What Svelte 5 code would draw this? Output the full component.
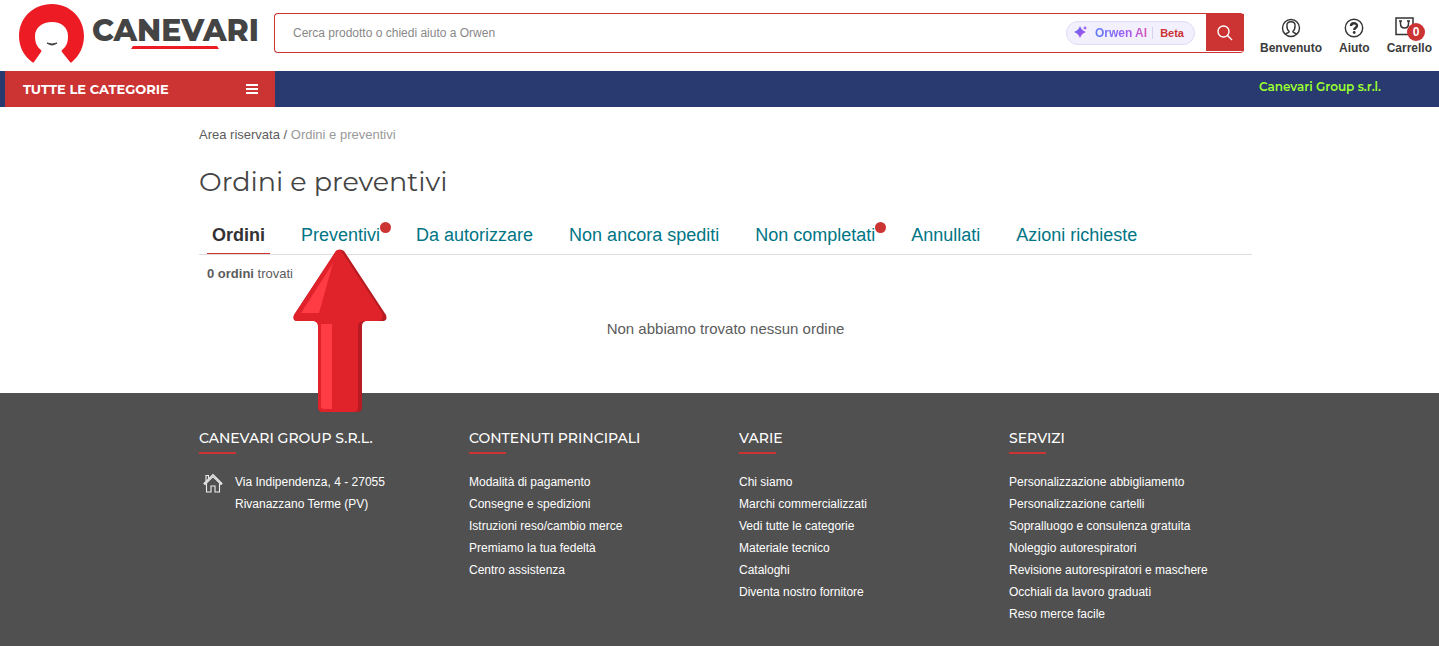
<script lang="ts">
  let query = '';
  let current = 'Ordini';

  const tabs = [
    { label: 'Ordini' },
    { label: 'Preventivi', alert: true, pointer: true },
    { label: 'Da autorizzare' },
    { label: 'Non ancora spediti' },
    { label: 'Non completati', alert: true },
    { label: 'Annullati' },
    { label: 'Azioni richieste' }
  ];

  const columns = [
    {
      title: 'Contenuti principali',
      links: [
        'Modalità di pagamento',
        'Consegne e spedizioni',
        'Istruzioni reso/cambio merce',
        'Premiamo la tua fedeltà',
        'Centro assistenza'
      ]
    },
    {
      title: 'Varie',
      links: [
        'Chi siamo',
        'Marchi commercializzati',
        'Vedi tutte le categorie',
        'Materiale tecnico',
        'Cataloghi',
        'Diventa nostro fornitore'
      ]
    },
    {
      title: 'Servizi',
      links: [
        'Personalizzazione abbigliamento',
        'Personalizzazione cartelli',
        'Sopralluogo e consulenza gratuita',
        'Noleggio autorespiratori',
        'Revisione autorespiratori e maschere',
        'Occhiali da lavoro graduati',
        'Reso merce facile'
      ]
    }
  ];
</script>

<svelte:head>
  <title>Ordini e preventivi | Canevari</title>
</svelte:head>

<div class="page">
  <header>
    <a class="logo" href="/" aria-label="Canevari">
      <svg width="66" height="60" viewBox="0 0 66 60" aria-hidden="true">
        <path
          d="M13 58 C5 52 0 43 0 32 C0 14 14 0 33 0 C51 0 65 14 65 32 C65 43 60 52 53 58 Q52 59 51 58 L43 48 Q42 47 43 46 C47 43 49 39 49 32 C49 24 43 18 33 18 C23 18 16 24 16 32 C16 39 18 43 22 46 Q23 47 22 48 L15 58 Q14 59 13 58Z"
          fill="#ed1c24"
        />
        <path d="M28 39 Q33 41 38 39 Q33 43 28 39Z" fill="#444" stroke="#444" />
      </svg>
      <span class="wordmark">
        CANEVARI
        <svg width="88" height="4" viewBox="0 0 88 4" aria-hidden="true">
          <path d="M2 0H86L88 3H0Z" fill="#ed1c24" />
        </svg>
      </span>
    </a>

    <form class="search" on:submit|preventDefault>
      <input type="text" bind:value={query} placeholder="Cerca prodotto o chiedi aiuto a Orwen" aria-label="Cerca prodotto" />
      <button type="button" class="orwen">
        <svg width="14" height="14" viewBox="0 0 14 14" aria-hidden="true">
          <defs>
            <linearGradient id="spark" x1="0" y1="0" x2="1" y2="1">
              <stop offset="0" stop-color="#4f6df5" />
              <stop offset="1" stop-color="#c04be0" />
            </linearGradient>
          </defs>
          <path d="M6 0Q7.500 4.500 12 6Q7.500 7.500 6 12Q4.500 7.500 0 6Q4.500 4.500 6 0Z" fill="url(#spark)" />
          <path d="M11 0Q11.500 1.500 13 2Q11.500 2.500 11 4Q10.500 2.500 9 2Q10.500 1.500 11 0Z" fill="#9c5af0" />
        </svg>
        <span class="ai">Orwen AI</span>
        <span class="beta">Beta</span>
      </button>
      <button type="submit" class="go" aria-label="Cerca">
        <svg width="16" height="16" viewBox="0 0 16 16" fill="none" stroke="#fff" stroke-width="1.4" aria-hidden="true">
          <circle cx="6.500" cy="6.500" r="5.500" />
          <path d="M10.500 10.500L15 15" />
        </svg>
      </button>
    </form>

    <nav class="tools" aria-label="Account">
      <a href="/account">
        <svg width="20" height="22" viewBox="0 0 20 22" fill="none" stroke="#333" stroke-width="1.400" aria-hidden="true">
          <circle cx="10" cy="11" r="8.500" />
          <path d="M4.500 17.300C5 15.700 8.200 16.200 8.200 14.500C6.300 13 5.900 10.500 5.900 8.500C5.900 6 7.500 4.700 10 4.700S14.100 6 14.100 8.500C14.100 10.500 13.700 13 11.800 14.500C11.800 16.200 15 15.700 15.500 17.300" />
        </svg>
        Benvenuto
      </a>
      <a href="/aiuto">
        <svg width="20" height="22" viewBox="0 0 20 22" fill="none" stroke="#333" aria-hidden="true">
          <circle cx="10" cy="11" r="8.700" stroke-width="1.400" />
          <path d="M7 9C7 5.300 13 5.500 13 8.700C13 10.700 10.200 10.800 10.200 13" stroke-width="2.400" />
          <circle cx="10.200" cy="15.500" r="1.400" fill="#333" stroke="none" />
        </svg>
        Aiuto
      </a>
      <a href="/carrello" class="cart">
        <svg width="20" height="22" viewBox="0 0 20 22" fill="none" stroke="#333" stroke-width="1.500" aria-hidden="true">
          <path d="M1 1H18V17.500H1Z" />
          <path d="M5.500 4V6.500C5.500 12.500 13.500 12.500 13.500 6.500V4M4 4H7M12 4H15" />
        </svg>
        <span class="count">0</span>
        Carrello
      </a>
    </nav>
  </header>

  <div class="bar">
    <button class="categories">
      TUTTE LE CATEGORIE
      <svg width="12" height="10" viewBox="0 0 12 10" aria-hidden="true">
        <path d="M0 1H12M0 5H12M0 9H12" stroke="#fff" stroke-width="2" />
      </svg>
    </button>
    <a class="company" href="/azienda">Canevari Group s.r.l.</a>
  </div>

  <main>
    <nav class="breadcrumb" aria-label="Breadcrumb">
      <a href="/area-riservata">Area riservata</a>
      <span>/</span>
      <span class="here">Ordini e preventivi</span>
    </nav>

    <h1>Ordini e preventivi</h1>

    <nav class="tabs" aria-label="Ordini">
      {#each tabs as tab}
        <a href="#{tab.label}" class:active={tab.label === current} on:click={() => (current = tab.label)}>
          {tab.label}
          {#if tab.alert}<span class="dot"></span>{/if}
          {#if tab.pointer}
            <svg class="pointer" width="94" height="164" viewBox="0 0 94 164" aria-hidden="true">
              <path d="M43 2Q47 -1 51 2L93 66Q95 72 89 72H73Q69 73 69 77V158Q69 163 64 163H30Q25 163 25 158V77Q25 73 21 72H5Q-1 72 1 66Z" fill="#b81c22" />
              <path d="M43 2Q46 -1 49 3L89 64Q91 71 85 72H70Q65 73 65 77V158Q65 163 61 163H30Q25 163 25 158V77Q25 73 21 72H5Q-1 72 1 66Z" fill="#e0232a" />
              <path d="M40 14L26 64H8Z" fill="#ff3b43" />
              <path d="M28 75H39V160H31Q28 160 28 157Z" fill="#ff3b43" />
            </svg>
          {/if}
        </a>
      {/each}
    </nav>

    <p class="found"><strong>0 ordini</strong> trovati</p>
    <p class="empty">Non abbiamo trovato nessun ordine</p>
  </main>

  <footer>
    <div class="columns">
      <section>
        <h2>Canevari Group s.r.l.</h2>
        <address>
          <svg width="20" height="22" viewBox="0 0 20 22" fill="none" stroke="#eee" stroke-width="1.100" aria-hidden="true">
            <path d="M1 12.500L10 3.500L19 12.500L18 13.500L10 5.500L2 13.500Z" />
            <path d="M3.500 12.500V21H8V15H12V21H16.500V12.500M3 10V4.500H5.500V7.500" />
          </svg>
          <span>Via Indipendenza, 4 - 27055<br />Rivanazzano Terme (PV)</span>
        </address>
      </section>
      {#each columns as column}
        <section>
          <h2>{column.title}</h2>
          <ul>
            {#each column.links as link}
              <li><a href="/info">{link}</a></li>
            {/each}
          </ul>
        </section>
      {/each}
    </div>
  </footer>
</div>

<style>
  :global(body) { background: #fff; }
  .page {
    min-height: 100vh;
    display: flex;
    flex-direction: column;
    font-family: Arial, "Liberation Sans", sans-serif;
    font-size: 13px;
    color: #5c5c5c;
  }
  a { color: inherit; text-decoration: none; }
  button { border: 0; padding: 0; font: inherit; cursor: pointer; }
  svg { display: block; flex: none; }

  header {
    display: flex;
    align-items: flex-start;
    height: 71px;
  }
  .logo {
    display: flex;
    gap: 7px;
    padding: 4px 16px 0 19px;
    width: 239px;
  }
  .wordmark {
    display: flex;
    flex-direction: column;
    align-items: center;
    padding-top: 12px;
    font: 800 30px/30px Montserrat, Inter, sans-serif;
    color: #444;
  }
  .search {
    flex: 1;
    display: flex;
    align-items: center;
    box-sizing: border-box;
    height: 40px;
    margin-top: 13px;
    border: 1px solid #c33;
    border-right: 0;
    border-radius: 4px;
  }
  .search input {
    flex: 1;
    min-width: 0;
    border: 0;
    outline: 0;
    background: none;
    padding: 0 18px;
    font: 12px Arial, "Liberation Sans", sans-serif;
  }
  .search input::placeholder { color: #888; }
  .orwen {
    display: flex;
    align-items: center;
    box-sizing: border-box;
    height: 24px;
    padding: 0 10px 0 7px;
    margin-right: 11px;
    border: 1px solid #dcdcf8;
    border-radius: 12px;
    background: #f3f0fe;
    font-size: 11px;
    font-weight: bold;
  }
  .ai {
    margin-left: 7px;
    padding-right: 5px;
    background: linear-gradient(90deg, #5b7cf7, #a45af0 60%, #e858a8);
    background-clip: text;
    color: transparent;
    font-size: 12px;
  }
  .beta { padding-left: 7px; border-left: 1px solid #d5d0ee; color: #c33; }
  .go {
    display: grid;
    place-items: center;
    align-self: flex-start;
    width: 38px;
    height: 37px;
    background: #c33;
  }
  .tools {
    display: flex;
    gap: 17px;
    padding: 17px 7px 0 16px;
    font-size: 12px;
    font-weight: bold;
    line-height: 18px;
    color: #3c3c3c;
  }
  .tools a { display: flex; flex-direction: column; align-items: center; }
  .cart { position: relative; }
  .tools .cart svg { align-self: flex-start; margin-left: 8px; }
  .count {
    position: absolute;
    top: 6px;
    right: 7px;
    width: 18px;
    height: 18px;
    border-radius: 9px;
    background: #c33;
    color: #fff;
    text-align: center;
  }

  .bar {
    display: flex;
    justify-content: space-between;
    height: 36px;
    padding: 0 58px 0 5px;
    background: #283a70;
    font-family: Montserrat, Inter, sans-serif;
  }
  .categories {
    display: flex;
    align-items: center;
    justify-content: space-between;
    box-sizing: border-box;
    width: 270px;
    padding: 0 17px 1px 18px;
    background: #c33;
    color: #fff;
    font-weight: 700;
  }
  .company { color: #9bff2e; font-size: 12px; font-weight: 600; line-height: 32px; }

  main, .columns {
    max-width: 1053px;
    width: 100%;
    margin: 0 auto;
  }
  main { padding: 19px 0 54px 12px; }
  .breadcrumb { line-height: 18px; }
  .here { color: #999; }
  h1 {
    margin: 20px 0 24px;
    font: 400 27px/36px Montserrat, Inter, sans-serif;
    color: #444;
  }
  .tabs {
    display: flex;
    gap: 26px;
    padding-left: 8px;
    border-bottom: 1px solid #ddd;
    font-size: 18px;
    line-height: 22px;
    color: #007585;
  }
  .tabs a { position: relative; padding: 0 5px 7px; border-bottom: 1px solid transparent; }
  .tabs .active { color: #333; font-weight: bold; border-color: #c33; }
  .dot {
    position: absolute;
    top: -2px;
    right: -6px;
    width: 11px;
    height: 11px;
    border-radius: 50%;
    background: #c33;
  }
  .pointer {
    position: absolute;
    top: 25px;
    left: calc(50% - 48px);
    z-index: 1;
    pointer-events: none;
  }
  .found { margin: 10px 8px 36px; line-height: 18px; }
  .empty { margin: 0; font-size: 15px; line-height: 20px; text-align: center; }

  footer {
    flex: 1;
    padding: 36px 0 20px 12px;
    background: #505050;
    color: #fff;
    font-size: 12px;
    line-height: 22px;
  }
  .columns { display: grid; grid-template-columns: repeat(4, 1fr); gap: 27px; }
  h2 {
    margin: 0 0 17px;
    font: 500 14px/18px Montserrat, Inter, sans-serif;
    text-transform: uppercase;
  }
  h2::after {
    content: "";
    display: block;
    width: 37px;
    height: 2px;
    margin-top: 5px;
    background: #c33;
  }
  address { display: flex; gap: 12px; padding-left: 4px; font-style: normal; }
  ul { margin: 0; padding: 0; list-style: none; }
</style>
